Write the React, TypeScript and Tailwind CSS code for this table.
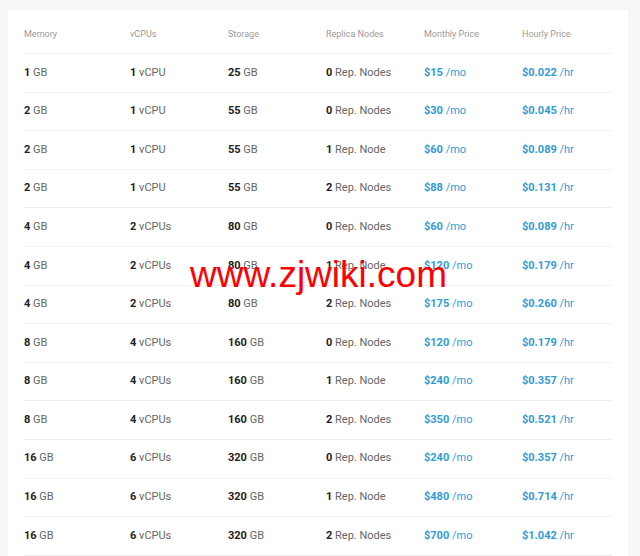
const rows: [number, number, number, number, number, string][] = [
  [1, 1, 25, 0, 15, '0.022'],
  [2, 1, 55, 0, 30, '0.045'],
  [2, 1, 55, 1, 60, '0.089'],
  [2, 1, 55, 2, 88, '0.131'],
  [4, 2, 80, 0, 60, '0.089'],
  [4, 2, 80, 1, 120, '0.179'],
  [4, 2, 80, 2, 175, '0.260'],
  [8, 4, 160, 0, 120, '0.179'],
  [8, 4, 160, 1, 240, '0.357'],
  [8, 4, 160, 2, 350, '0.521'],
  [16, 6, 320, 0, 240, '0.357'],
  [16, 6, 320, 1, 480, '0.714'],
  [16, 6, 320, 2, 700, '1.042'],
];

const cols = ['w-[106px]', 'w-[98px]', 'w-[98px]', 'w-[98px]', 'w-[98px]', 'flex-1'];
const heads = ['Memory', 'vCPUs', 'Storage', 'Replica Nodes', 'Monthly Price', 'Hourly Price'];

export default function App() {
  return (
    <div className="relative h-[556px] w-[640px] overflow-hidden bg-[#f6f6f6] pt-[10px] pl-[8px] font-['Roboto',sans-serif]">
      <div className="w-[620px] bg-white px-[16px]">
        <div className="flex h-[44px] items-center border-b border-[#eeeeee] pt-[6px] text-[9px] text-[#9a9a9a]">
          {heads.map((h, i) => (
            <div key={h} className={cols[i]}>{h}</div>
          ))}
        </div>
        {rows.map((r, idx) => (
          <div key={idx} className="flex h-[38.6px] items-center border-b border-[#eeeeee] text-[11px] text-[#666666]">
            <div className={cols[0]}><b className="font-bold text-[#222]">{r[0]}</b> GB</div>
            <div className={cols[1]}><b className="font-bold text-[#222]">{r[1]}</b> {r[1] === 1 ? 'vCPU' : 'vCPUs'}</div>
            <div className={cols[2]}><b className="font-bold text-[#222]">{r[2]}</b> GB</div>
            <div className={cols[3]}><b className="font-bold text-[#222]">{r[3]}</b> {r[3] === 1 ? 'Rep. Node' : 'Rep. Nodes'}</div>
            <div className={cols[4] + ' text-[#2f9bd6]'}><b className="font-bold">${r[4]}</b> /mo</div>
            <div className={cols[5] + ' text-[#2f9bd6]'}><b className="font-bold">${r[5]}</b> /hr</div>
          </div>
        ))}
      </div>
      <div className="absolute left-[190px] top-[255px] font-['Liberation_Sans',sans-serif] text-[37px] leading-[40px] text-[#f00]">
        www.zjwiki.com
      </div>
    </div>
  );
}
